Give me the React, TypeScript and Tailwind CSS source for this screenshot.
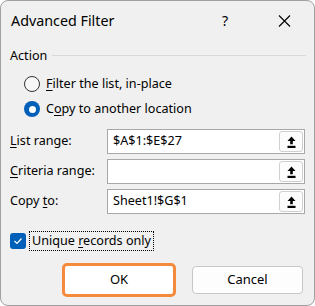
import React from "react";

const font = { fontFamily: '"Noto Sans", "Open Sans", sans-serif' };

function U({ children }: { children: React.ReactNode }) {
  return <span className="underline underline-offset-[2px] decoration-[1px]">{children}</span>;
}

function UploadBtn() {
  return (
    <div className="w-[24px] h-[21px] mr-px border border-[#d0d0d0] rounded-[3px] bg-[#fcfcfc] flex items-center justify-center">
      <svg width="9" height="12" viewBox="0 0 9 12">
        <path d="M4.5 0.5 L8.5 5 L5.8 5 L5.8 8.2 L3.2 8.2 L3.2 5 L0.5 5 Z" fill="#000" />
        <rect x="0.5" y="9.8" width="8" height="2.2" fill="#000" />
      </svg>
    </div>
  );
}

function RangeRow({ label, value }: { label: React.ReactNode; value: string }) {
  return (
    <div className="flex items-center h-[25px] pl-[9px]">
      <div className="w-[97px] text-[12.6px] text-black leading-none">{label}</div>
      <div className="w-[198px] h-[25px] border border-[#a8a8a8] bg-white flex items-center">
        <div className="flex-1 pl-[5px] text-[12.6px] text-black leading-none">{value}</div>
        <UploadBtn />
      </div>
    </div>
  );
}

export default function App() {
  return (
    <div style={font} className="w-[315px] h-[306px] border border-[#a0a0a0] rounded-[8px] bg-[#f0f0f0] flex flex-col overflow-hidden text-black">
      <div className="h-[39px] flex items-center pl-[10px] pr-[23px]">
        <span className="flex-1 text-[14.3px]">Advanced Filter</span>
        <span className="text-[14.3px] w-[8px]">?</span>
        <div className="w-[48px]" />
        <svg width="13" height="12" viewBox="0 0 13 12">
          <path d="M1 0.5 L12 11.5 M12 0.5 L1 11.5" stroke="#000" strokeWidth="1.1" fill="none" />
        </svg>
      </div>

      <div className="mt-[6px] h-[20px] flex items-center pl-[9px] pr-[8px]">
        <span className="text-[12.6px] leading-none">Action</span>
        <div className="flex-1 h-px bg-[#d9d9d9] ml-[5px] -mt-[2px]" />
      </div>

      <div className="mt-[8px] h-[20px] flex items-center pl-[23px]">
        <div className="w-[16px] h-[16px] rounded-full border border-[#333] bg-[#f7f7f7]" />
        <span className="ml-[6px] text-[12.6px] leading-none"><U>F</U>ilter the list, in-place</span>
      </div>

      <div className="mt-[5px] h-[20px] flex items-center pl-[23px]">
        <div className="w-[16px] h-[16px] rounded-full bg-[#005fb8] flex items-center justify-center">
          <div className="w-[7px] h-[7px] rounded-full bg-white" />
        </div>
        <span className="ml-[6px] text-[12.6px] leading-none">C<U>o</U>py to another location</span>
      </div>

      <div className="mt-[10px] flex flex-col gap-[5px]">
        <RangeRow label={<><U>L</U>ist range:</>} value="$A$1:$E$27" />
        <RangeRow label={<><U>C</U>riteria range:</>} value="" />
        <RangeRow label={<>Copy <U>t</U>o:</>} value="Sheet1!$G$1" />
      </div>

      <div className="mt-[17px] h-[20px] flex items-center pl-[9px]">
        <div className="w-[16px] h-[16px] rounded-[3px] bg-[#005fb8] flex items-center justify-center">
          <svg width="10" height="8" viewBox="0 0 10 8">
            <path d="M1.5 4 L4 6.5 L8.5 1.5" stroke="#fff" strokeWidth="1.2" fill="none" />
          </svg>
        </div>
        <div className="ml-[3px] h-[20px] border border-dotted border-black flex items-center px-[2px]">
          <span className="text-[12.6px] leading-none">Unique <U>r</U>ecords only</span>
        </div>
      </div>

      <div className="mt-[12px] flex items-center pl-[61px]">
        <div className="w-[114px] h-[34px] border-[3px] border-[#f58a3c] rounded-[5px] bg-white flex items-center justify-center text-[13px]">OK</div>
        <div className="ml-[16px] w-[111px] h-[28px] border border-[#c8c8c8] rounded-[4px] bg-[#fdfdfd] flex items-center justify-center text-[13px]">Cancel</div>
      </div>
    </div>
  );
}
